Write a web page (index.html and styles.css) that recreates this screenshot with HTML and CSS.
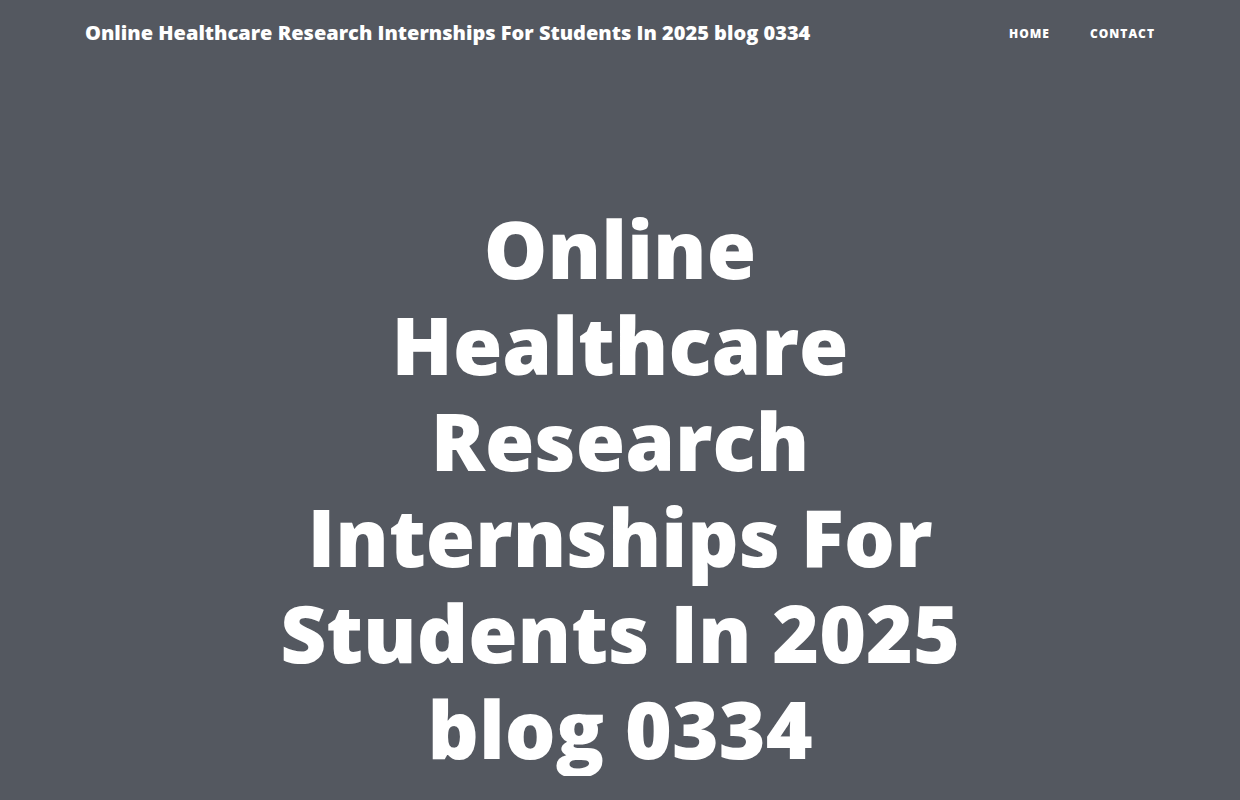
FILE: index.html
```html
<!DOCTYPE html>
<html lang="en">
<head>
  <meta charset="UTF-8" />
  <meta name="viewport" content="width=device-width, initial-scale=1.0"/>
  <title>Online Healthcare Research Internships For Students In 2025 blog 0334</title>
  <link rel="stylesheet" href="styles.css">
</head>
<body>
  <header class="site-header">
    <div class="site-title">Online Healthcare Research Internships For Students In 2025 blog 0334</div>
    <ul class="site-nav">
      <li><a href="#">Home</a></li>
      <li><a href="#">Contact</a></li>
    </ul>
  </header>

  <main class="hero">
    <h1>Online Healthcare Research Internships For Students In 2025 blog 0334</h1>
  </main>
</body>
</html>
```

FILE: styles.css
```css
body {
  font-family: 'Open Sans', sans-serif;
  background-color: #545860;
  color: #fff;
  margin: 0;
  padding: 0;
}
.site-header {
  max-width: 1070px;
  margin: 0 auto;
  height: 64px;
  display: flex;
  justify-content: space-between;
  align-items: center;
}
.site-title {
  font-size: 20px;
  font-weight: 800;
}
.site-nav {
  list-style: none;
  margin: 0;
  padding: 0;
  display: flex;
  gap: 40px;
}
.site-nav a {
  color: #fff;
  text-decoration: none;
  font-size: 12px;
  font-weight: 800;
  text-transform: uppercase;
  letter-spacing: 1px;
}
.hero {
  max-width: 700px;
  margin: 0 auto;
  padding-top: 136px;
  text-align: center;
}
.hero h1 {
  margin: 0;
  font-size: 80px;
  font-weight: 800;
  line-height: 96px;
}
```
